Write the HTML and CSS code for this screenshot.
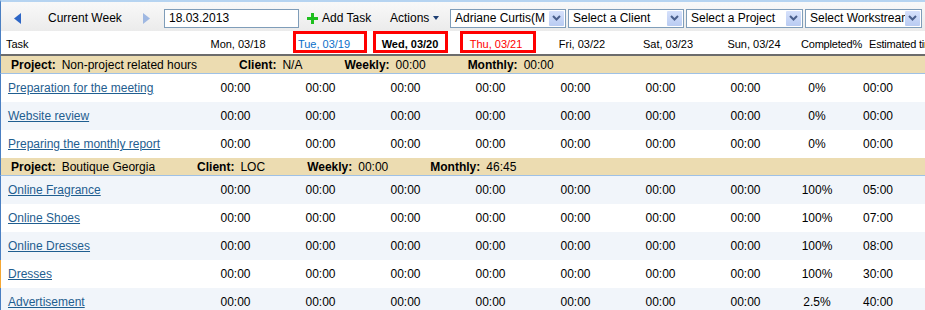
FILE: index.html
```html
<!DOCTYPE html>
<html lang="en">
<head>
  <meta charset="UTF-8">
  <title>Timesheet</title>
  <link rel="stylesheet" href="styles.css">
</head>
<body>
  <div class="page">
    <div class="toolbar">
      <span class="nav nav-prev"><svg width="7" height="11" viewBox="0 0 7 11"><polygon points="7,0 7,11 0,5.5" fill="#2d66c6"/></svg></span>
      <span class="week-label">Current Week</span>
      <span class="nav nav-next"><svg width="7" height="11" viewBox="0 0 7 11"><polygon points="0,0 0,11 7,5.5" fill="#9fb8e2"/></svg></span>
      <div class="date-box">18.03.2013</div>
      <span class="add-task"><svg width="11" height="11" viewBox="0 0 11 11"><rect x="4" y="0" width="3" height="11" fill="#1fbf1f"/><rect x="0" y="4" width="11" height="3" fill="#1fbf1f"/></svg>Add Task</span>
      <span class="actions">Actions<svg width="6" height="4" viewBox="0 0 6 4"><polygon points="0,0 6,0 3,4" fill="#1e3f73"/></svg></span>
      <div class="combo combo-1"><span class="combo-text">Adriane Curtis(M</span><span class="combo-btn"><svg width="9" height="6" viewBox="0 0 9 6"><polyline points="1,1 4.5,4.5 8,1" fill="none" stroke="#4a5f8c" stroke-width="2"/></svg></span></div>
      <div class="combo combo-2"><span class="combo-text">Select a Client</span><span class="combo-btn"><svg width="9" height="6" viewBox="0 0 9 6"><polyline points="1,1 4.5,4.5 8,1" fill="none" stroke="#4a5f8c" stroke-width="2"/></svg></span></div>
      <div class="combo combo-3"><span class="combo-text">Select a Project</span><span class="combo-btn"><svg width="9" height="6" viewBox="0 0 9 6"><polyline points="1,1 4.5,4.5 8,1" fill="none" stroke="#4a5f8c" stroke-width="2"/></svg></span></div>
      <div class="combo combo-4"><span class="combo-text">Select Workstream</span><span class="combo-btn"><svg width="9" height="6" viewBox="0 0 9 6"><polyline points="1,1 4.5,4.5 8,1" fill="none" stroke="#4a5f8c" stroke-width="2"/></svg></span></div>
    </div>

    <div class="head">
      <div class="hc hc-task">Task</div>
      <div class="hc">Mon, 03/18</div>
      <div class="hc mark mark-tue">Tue, 03/19</div>
      <div class="hc mark mark-wed">Wed, 03/20</div>
      <div class="hc mark mark-thu">Thu, 03/21</div>
      <div class="hc">Fri, 03/22</div>
      <div class="hc">Sat, 03/23</div>
      <div class="hc">Sun, 03/24</div>
      <div class="hc hc-left">Completed%</div>
      <div class="hc hc-left hc-last">Estimated time</div>
    </div>

    <!-- Non-project -->
    <div class="project">
      <span><b>Project:</b><span class="val">Non-project related hours</span></span>
      <span><b>Client:</b><span class="val">N/A</span></span>
      <span><b>Weekly:</b><span class="val">00:00</span></span>
      <span><b>Monthly:</b><span class="val">00:00</span></span>
    </div>
    <div class="row">
      <a href="#">Preparation for the meeting</a>
      <span>00:00</span><span>00:00</span><span>00:00</span><span>00:00</span><span>00:00</span><span>00:00</span><span>00:00</span>
      <span>0%</span><span>00:00</span>
    </div>
    <div class="row alt">
      <a href="#">Website review</a>
      <span>00:00</span><span>00:00</span><span>00:00</span><span>00:00</span><span>00:00</span><span>00:00</span><span>00:00</span>
      <span>0%</span><span>00:00</span>
    </div>
    <div class="row">
      <a href="#">Preparing the monthly report</a>
      <span>00:00</span><span>00:00</span><span>00:00</span><span>00:00</span><span>00:00</span><span>00:00</span><span>00:00</span>
      <span>0%</span><span>00:00</span>
    </div>

    <!-- Boutique Georgia -->
    <div class="project">
      <span><b>Project:</b><span class="val">Boutique Georgia</span></span>
      <span><b>Client:</b><span class="val">LOC</span></span>
      <span><b>Weekly:</b><span class="val">00:00</span></span>
      <span><b>Monthly:</b><span class="val">46:45</span></span>
    </div>
    <div class="row alt">
      <a href="#">Online Fragrance</a>
      <span>00:00</span><span>00:00</span><span>00:00</span><span>00:00</span><span>00:00</span><span>00:00</span><span>00:00</span>
      <span>100%</span><span>05:00</span>
    </div>
    <div class="row">
      <a href="#">Online Shoes</a>
      <span>00:00</span><span>00:00</span><span>00:00</span><span>00:00</span><span>00:00</span><span>00:00</span><span>00:00</span>
      <span>100%</span><span>07:00</span>
    </div>
    <div class="row alt">
      <a href="#">Online Dresses</a>
      <span>00:00</span><span>00:00</span><span>00:00</span><span>00:00</span><span>00:00</span><span>00:00</span><span>00:00</span>
      <span>100%</span><span>08:00</span>
    </div>
    <div class="row flagged">
      <a href="#">Dresses</a>
      <span>00:00</span><span>00:00</span><span>00:00</span><span>00:00</span><span>00:00</span><span>00:00</span><span>00:00</span>
      <span>100%</span><span>30:00</span>
    </div>
    <div class="row alt">
      <a href="#">Advertisement</a>
      <span>00:00</span><span>00:00</span><span>00:00</span><span>00:00</span><span>00:00</span><span>00:00</span><span>00:00</span>
      <span>2.5%</span><span>40:00</span>
    </div>
  </div>
</body>
</html>
```

FILE: styles.css
```css
:root {
  --edge-color: #4a7fc2;
  --flag-color: #f5a733;
  --project-bg: #ecdcb1;
  --alt-bg: #f1f5fa;
  --link-color: #1f5e90;
  --field-border: #7f9db9;
}

body {
  margin: 0;
  font-family: 'Liberation Sans', Arial, sans-serif;
  font-size: 12px;
  color: #000;
  background: #fff;
}

.page {
  width: 925px;
  overflow: hidden;
}

/* toolbar */
.toolbar {
  display: flex;
  align-items: center;
  height: 26px;
  padding-top: 3px;
  border-top: 2px solid #b6d4f1;
  border-left: 1px solid var(--edge-color);
  background: linear-gradient(#f9f9f9, #ebebeb);
  white-space: nowrap;
}

.nav {
  display: flex;
  width: 7px;
}

.nav-prev { margin-left: 13px; }
.nav-next { margin-left: 21px; }

.week-label {
  margin-left: 27px;
  width: 74px;
}

.date-box {
  margin-left: 14px;
  box-sizing: border-box;
  width: 135px;
  height: 19px;
  line-height: 17px;
  padding-left: 4px;
  border: 1px solid var(--field-border);
  background: #fff;
}

.add-task {
  display: flex;
  align-items: center;
  gap: 4px;
  width: 65px;
  margin-left: 8px;
}

.actions {
  display: flex;
  align-items: center;
  gap: 4px;
  width: 50px;
  margin-left: 18px;
}

.combo {
  display: flex;
  align-items: center;
  box-sizing: border-box;
  height: 19px;
  margin-left: 2px;
  border: 1px solid var(--field-border);
  background: #fff;
}

.combo-1 { width: 116px; margin-left: 10px; }
.combo-2 { width: 116px; }
.combo-3 { width: 117px; }
.combo-4 { width: 117px; }

.combo-text {
  flex: 1;
  overflow: hidden;
  padding-left: 4px;
}

.combo-btn {
  display: flex;
  align-items: center;
  justify-content: center;
  width: 15px;
  height: 15px;
  margin-right: 1px;
  border-radius: 1px;
  background: linear-gradient(#d6e1fb, #b9cbf2);
}

/* column header */
.head {
  display: grid;
  grid-template-columns: 194px repeat(7, 86px) 68px 1fr;
  height: 23px;
  border-left: 1px solid var(--edge-color);
  border-bottom: 2px solid #6c6c6c;
  font-size: 11px;
  white-space: nowrap;
}

.hc {
  position: relative;
  padding-top: 7px;
  text-align: center;
}

.hc-task { text-align: left; padding-left: 5px; }
.hc-left { text-align: left; padding-left: 4px; letter-spacing: -0.2px; }
.hc-last { overflow: hidden; }

.mark::after {
  content: '';
  position: absolute;
  top: 0;
  height: 22px;
  box-sizing: border-box;
  border: 3px solid #f00;
}

.mark-tue { color: #0a6fc9; }
.mark-tue::after { left: 12px; width: 74px; }

.mark-wed { font-weight: bold; }
.mark-wed::after { left: 6px; width: 75px; }

.mark-thu { color: #f00; }
.mark-thu::after { left: 7px; width: 76px; }

/* project band */
.project {
  display: flex;
  align-items: center;
  gap: 42px;
  height: 17px;
  padding-left: 10px;
  border-left: 1px solid var(--edge-color);
  border-bottom: 1px solid #9fc1e5;
  background: var(--project-bg);
  white-space: nowrap;
}

.project .val {
  margin-left: 6px;
}

/* task rows */
.row {
  display: grid;
  grid-template-columns: 192px repeat(7, 85px) 58px 64px 1fr;
  align-items: center;
  height: 28px;
  border-left: 1px solid var(--edge-color);
  background: #fff;
  white-space: nowrap;
}

.row.alt { background: var(--alt-bg); }
.row.flagged { border-left-color: var(--flag-color); }

.row a {
  padding-left: 7px;
  color: var(--link-color);
}

.row span {
  text-align: center;
}
```
